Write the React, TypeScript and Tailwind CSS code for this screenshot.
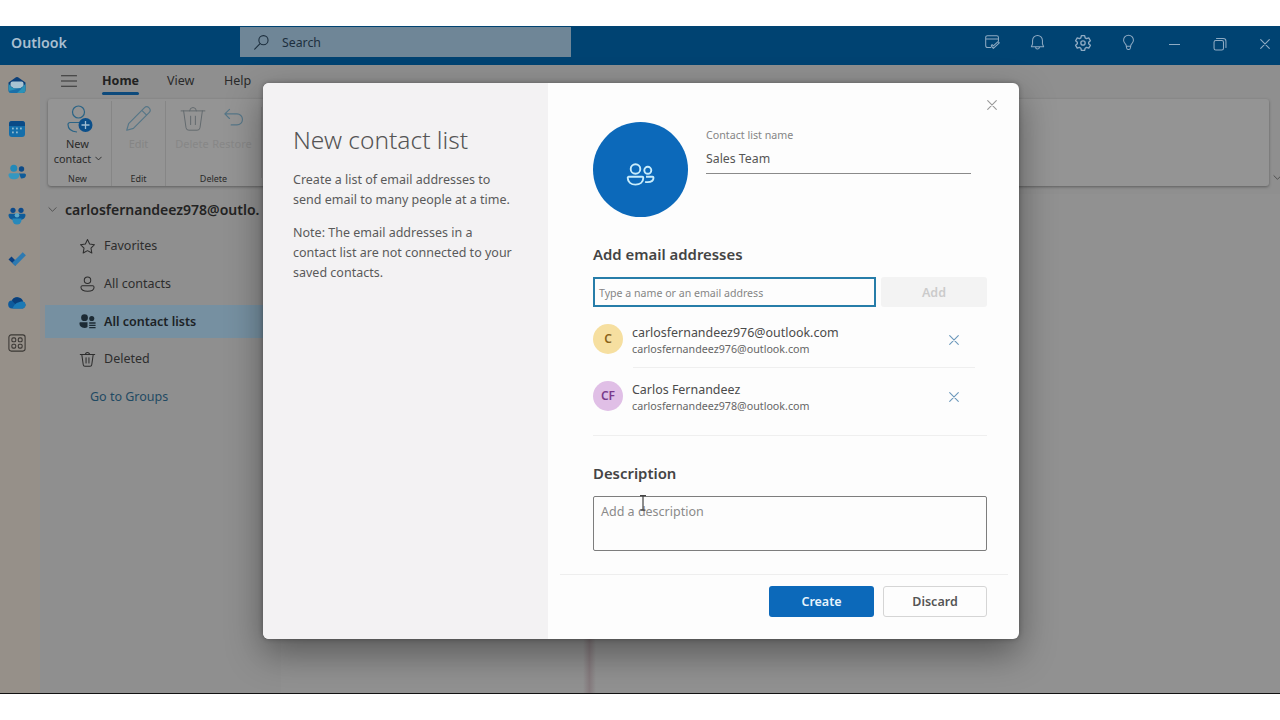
import React from "react";

type P = { children?: React.ReactNode; className?: string };

function Svg({ children, className = "", size = 18, sw = 1.2 }: P & { size?: number; sw?: number }) {
  return (
    <svg width={size} height={size} viewBox="0 0 20 20" fill="none" stroke="currentColor" strokeWidth={sw} strokeLinecap="round" strokeLinejoin="round" className={`shrink-0 ${className}`}>
      {children}
    </svg>
  );
}

function Cross({ size, className }: { size: number; className?: string }) {
  return (
    <svg width={size} height={size} viewBox="0 0 10 10" fill="none" stroke="currentColor" strokeWidth="1.1" strokeLinecap="round" className={className}>
      <path d="M0.7 0.7L9.3 9.3M9.3 0.7L0.7 9.3" />
    </svg>
  );
}

function Trash({ size, sw, className }: { size: number; sw?: number; className?: string }) {
  return (
    <Svg size={size} sw={sw} className={className}>
      <path d="M1.500 4.200h17M7.600 4.200a2.400 2.400 0 0 1 4.800 0M3.300 4.200l1.700 12a2 2 0 0 0 2 1.800h6a2 2 0 0 0 2-1.800l1.700-12M8.300 8v6M11.700 8v6" />
    </Svg>
  );
}

function TopBar() {
  return (
    <header className="flex h-[39px] shrink-0 bg-[#004372] text-[#8fabc3]">
      <div className="w-[240px] pl-[11px] pt-[7px] text-[14.200px] font-semibold leading-5 text-[#a9bfd0]">Outlook</div>
      <div className="mt-px flex h-[30px] w-[331px] items-center bg-[#6f8697] pl-[13px] text-[#1d2f3e]">
        <Svg size={17} sw={1.3}>
          <circle cx="12.300" cy="7.300" r="5.400" />
          <path d="M8.300 11.300L2 17.800" />
        </Svg>
        <span className="ml-[12px] pt-[2px] text-[12.300px]">Search</span>
      </div>
      <div className="ml-auto flex pr-[10px] pt-[8px]">
        <div className="flex w-[45px] justify-start"><Svg size={17}><path d="M8 16H4.500A2.500 2.500 0 0 1 2 13.500V4a2 2 0 0 1 2-2h11a2 2 0 0 1 2 2v4M2 6h15M8.500 14l2.500 3 7-6.500-1.500-1.500-5.500 5-1.500-1.500z" /></Svg></div>
        <div className="flex w-[45px] justify-start"><Svg size={17}><path d="M10 1.800a5.800 5.800 0 0 0-5.800 5.800v4L2.800 15h14.400l-1.400-3.400v-4A5.800 5.800 0 0 0 10 1.800zM7.800 15.500a2.200 2.200 0 0 0 4.400 0" /></Svg></div>
        <div className="flex w-[45px] justify-start"><Svg size={18} sw={1.5}><path d="M8.200 1.800h3.600l.6 2.500 1.500.9 2.500-.8 1.800 3.100-1.900 1.700v1.700l1.900 1.700-1.800 3.100-2.500-.8-1.500.9-.6 2.400H8.200l-.6-2.400-1.500-.9-2.500.8-1.800-3.100 1.900-1.700V9.200L1.800 7.500l1.800-3.100 2.500.8 1.500-.9z" /><circle cx="10" cy="10" r="2.400" /></Svg></div>
        <div className="flex w-[50px] justify-start pl-px"><Svg size={17}><path d="M10 1.500a5.800 5.800 0 0 0-5.800 5.800c0 2.200 1.200 3.500 2.300 4.700.5.500.7 1 .8 1.600l.6 3.200a1.700 1.700 0 0 0 1.600 1.400h1a1.700 1.700 0 0 0 1.600-1.400l.6-3.200c.1-.6.300-1.100.8-1.600 1.100-1.200 2.300-2.500 2.300-4.700A5.800 5.800 0 0 0 10 1.500zM7.300 14.500h5.400" /></Svg></div>
        <div className="w-[44px] pt-[10px]"><div className="h-px w-[11px] bg-[#8fabc3]" /></div>
        <div className="w-[47px] pt-[3px]"><Svg size={14} sw={1.5}><rect x="1.500" y="5" width="13.500" height="13.500" rx="2.500" /><path d="M5 2h9.500a4 4 0 0 1 4 4v9" /></Svg></div>
        <div className="pt-[5px]"><Cross size={10} /></div>
      </div>
    </header>
  );
}

function RailItem({ children }: P) {
  return <div className="flex h-[43.500px] items-center pl-[8px]">{children}</div>;
}

function Rail() {
  return (
    <nav className="flex w-[40px] shrink-0 flex-col bg-[#969089]">
      <div className="-mt-[2px]" />
      <RailItem>
        <svg width="18" height="18" viewBox="0 0 18 18">
          <path d="M0.500 6.500L8 1.300a2 2 0 0 1 2 0l7.500 5.200v7.500a3 3 0 0 1-3 3h-11a3 3 0 0 1-3-3z" fill="#0c3f78" />
          <path d="M2.500 7.500a2 2 0 0 1 2-2h9a2 2 0 0 1 2 2V10L12 12.500H6L2.500 10z" fill="#a9c3d2" />
          <path d="M0.500 7.500L2.500 10c1.500 2 4 2.500 6.500 2.500s5-.5 6.500-2.500l2-2.500V14a3 3 0 0 1-3 3h-11a3 3 0 0 1-3-3z" fill="#2b92b8" />
          <path d="M0.800 15L12 12.300h2L9 17H3.500a3 3 0 0 1-2.700-2z" fill="#1a6fa8" />
        </svg>
      </RailItem>
      <RailItem>
        <svg width="18" height="18" viewBox="0 0 18 18" className="mt-px">
          <rect x="1" y="1" width="16" height="16" rx="3" fill="#146eaa" />
          <path d="M1 6V4a3 3 0 0 1 3-3h10a3 3 0 0 1 3 3v2z" fill="#0b4a86" />
          <g fill="#8db8cf"><rect x="4" y="7.600" width="1.800" height="1.800" /><rect x="8" y="7.600" width="1.800" height="1.800" /><rect x="12" y="7.600" width="1.800" height="1.800" /><rect x="4" y="11.500" width="1.800" height="1.800" /><rect x="8" y="11.500" width="1.800" height="1.800" /></g>
        </svg>
      </RailItem>
      <RailItem>
        <svg width="19" height="18" viewBox="0 0 19 18" className="mt-px">
          <circle cx="5.800" cy="5.300" r="3.500" fill="#2389b8" />
          <circle cx="13.500" cy="6" r="2.700" fill="#0d4a86" />
          <path d="M11 10.500h5.500a1.500 1.500 0 0 1 1.500 1.500c0 2.500-2 3.500-5 3.500z" fill="#0f5b99" />
          <path d="M2 10.200h8A1.500 1.500 0 0 1 11.500 11.700c0 3.200-2.500 4.500-5.500 4.500S0.500 15 0.500 11.700a1.500 1.500 0 0 1 1.500-1.500z" fill="#3597c0" />
        </svg>
      </RailItem>
      <RailItem>
        <svg width="18" height="18" viewBox="0 0 18 18" className="mt-px">
          <circle cx="5" cy="3.300" r="2.600" fill="#0c4a8a" />
          <circle cx="13" cy="3.300" r="2.600" fill="#0c4a8a" />
          <path d="M1.500 6.800h15a1.200 1.200 0 0 1 1 1.200C17.500 11 15 13 11 13H7C3 13 0.500 11 0.500 8a1.200 1.200 0 0 1 1-1.200z" fill="#0e5c9a" />
          <circle cx="9" cy="8.300" r="2.300" fill="#5fa9c8" />
          <path d="M4.500 11.500h9v1.500a4.500 4.500 0 0 1-9 0z" fill="#2789bb" />
        </svg>
      </RailItem>
      <RailItem>
        <svg width="19" height="18" viewBox="0 0 19 18">
          <path d="M0.500 9.500L3.500 6.500 8.500 11.500 7.300 15.800z" fill="#0b3f80" />
          <path d="M7.300 15.900L4.200 12.800 14.700 2.300l3.200 3z" fill="#2d7ab2" />
        </svg>
      </RailItem>
      <RailItem>
        <svg width="19" height="14" viewBox="0 0 19 14" className="mt-[2px]">
          <path d="M4.500 12.500a4 4 0 0 1-.6-8A6 6 0 0 1 15 5.600a3.600 3.600 0 0 1 0 6.900z" fill="#0d5a9c" />
          <path d="M4 4.500A6 6 0 0 1 15 5.600L8 9z" fill="#0a3f7a" />
          <path d="M4.500 12.500c2-5 6-7 10.500-6.900a3.600 3.600 0 0 1 0 6.900z" fill="#1b79b5" />
        </svg>
      </RailItem>
      <div className="-mt-[3px]" />
      <RailItem>
        <Svg size={18} className="text-[#3b3835]">
          <rect x="1" y="1" width="18" height="18" rx="2.500" />
          <rect x="4.300" y="4.300" width="4.300" height="4.300" rx="1.500" />
          <rect x="11.400" y="4.300" width="4.300" height="4.300" rx="1.500" />
          <rect x="4.300" y="11.400" width="4.300" height="4.300" rx="1.500" />
          <rect x="11.400" y="11.400" width="4.300" height="4.300" rx="1.500" />
        </Svg>
      </RailItem>
    </nav>
  );
}

function Ribbon() {
  return (
    <div className="ml-[8px] flex h-[87px] w-[1221px] rounded-[3px] bg-[#949494] text-[11px] leading-[15px] text-[#2a2a2a] shadow-[0_1px_3px_rgba(0,0,0,0.35)]">
      <div className="mt-[2px] flex w-[64px] flex-col items-center border-r border-[#868686] pr-[4px]">
        <svg width="28" height="32" viewBox="0 0 28 32" fill="none" className="ml-[4px] mt-[3px] shrink-0">
          <circle cx="12.500" cy="8" r="6" stroke="#2b6486" strokeWidth="1.200" />
          <path d="M11 28C5 27.500 2 24.500 2 20.500a2 2 0 0 1 2-2h9" stroke="#2b6486" strokeWidth="1.200" />
          <circle cx="19.500" cy="21" r="7" fill="#0b4f8a" />
          <path d="M19.500 17v8M15.500 21h8" stroke="#9fbdd2" strokeWidth="1.300" />
        </svg>
        <div className="h-[15px]">New</div>
        <div className="flex items-center whitespace-nowrap pl-px text-[10.800px]">contact<Svg size={7} sw={2.6} className="ml-[4px]"><path d="M2 6l8 8 8-8" /></Svg></div>
        <div className="mt-[5px] text-[9px]">New</div>
      </div>
      <div className="mt-[2px] flex w-[54px] flex-col items-center border-r border-[#868686]">
        <Svg size={29} sw={0.8} className="mt-[3px] text-[#567687]"><path d="M14 2.700a2.300 2.300 0 0 1 3.300 3.300L6.500 16.800l-4.600 1.300 1.300-4.600zM12.300 4.400l3.300 3.300" /></Svg>
        <div className="mt-[3px] text-[#858585]">Edit</div>
        <div className="mt-[20px] text-[9px]">Edit</div>
      </div>
      <div className="mt-[2px] flex w-[95px] flex-col items-center">
        <div className="flex h-[35px] items-start gap-[15px] pr-[4px] pt-[4px]">
          <Trash size={28} sw={0.7} className="text-[#62696e]" />
          <Svg size={23} sw={1} className="mt-[2px] text-[#567687]"><path d="M6.500 2L2.500 6l4 4M2.500 6H13a4.800 4.800 0 0 1 0 9.600H8" /></Svg>
        </div>
        <div className="flex gap-[3px] text-[#878787]"><span className="w-[34px]">Delete</span><span>Restore</span></div>
        <div className="mt-[20px] text-[9px]">Delete</div>
      </div>
      <div className="my-2 w-px bg-[#868686]" />
    </div>
  );
}

function TreeRow({ icon, label, active }: { icon: React.ReactNode; label: string; active?: boolean }) {
  return (
    <div className={`ml-[4px] flex h-[33px] items-center pl-[34px] ${active ? "bg-[#7690a1] font-semibold text-[#1c2226]" : "text-[#2d2d2d]"}`}>
      {icon}
      <span className="ml-[8px] text-[12.500px]">{label}</span>
    </div>
  );
}

function Page() {
  return (
    <div className="relative flex h-[628px] shrink-0 overflow-hidden bg-[#8f8f8f]">
      <Rail />
      <div className="min-w-0 flex-1">
        <div className="flex h-[34px] pl-[21px] pt-[5px] text-[12.500px] leading-[20px] text-[#2a2a2a]">
          <Svg size={16} sw={1.3} className="mt-[3px] text-[#333]"><path d="M0.500 3.500h19M0.500 10h19M0.500 16.500h19" /></Svg>
          <div className="ml-[25px] w-[37px] pt-[0.500px] font-bold text-[#222]">
            Home
            <div className="mt-[1.500px] h-[3px] rounded-full bg-[#0d4a7c]" />
          </div>
          <div className="ml-[28px] w-[57px] pt-[0.500px]">View</div>
          <div className="pt-[0.500px]">Help</div>
        </div>
        <Ribbon />
        <div className="flex">
          <div className="w-[241px] shrink-0 pt-[12px]">
            <div className="flex h-[23px] items-center pl-[8px]">
              <Svg size={9} sw={1.8} className="text-[#444]"><path d="M2 6l8 8 8-8" /></Svg>
              <span className="ml-[8px] w-[196px] overflow-hidden whitespace-nowrap text-[14px] font-semibold text-[#232323]">carlosfernandeez978@outlo.</span>
            </div>
            <div className="ml-px mt-[9px] flex flex-col gap-[4.700px]">
              <TreeRow label="Favorites" icon={<Svg size={17}><path d="M10 1.800l2.500 5.300 5.700.8-4.100 4 1 5.800-5.100-2.800-5.100 2.800 1-5.800-4.100-4 5.700-.8z" /></Svg>} />
              <TreeRow label="All contacts" icon={<Svg size={17}><circle cx="10" cy="5" r="3.800" /><path d="M3.800 11.500h12.400a1.600 1.600 0 0 1 1.500 1.700c0 3-3.200 4.800-7.700 4.800s-7.700-1.800-7.700-4.800A1.600 1.600 0 0 1 3.800 11.500z" /></Svg>} />
              <TreeRow active label="All contact lists" icon={
                <svg width="17" height="17" viewBox="0 0 20 20" fill="#1c2a34"><circle cx="6.500" cy="5.500" r="4" /><circle cx="15" cy="6.500" r="3" /><path d="M1.500 11H10V16.500c-1 .7-2 1-3.500 1-4 0-6-2-6-5.300a1.200 1.200 0 0 1 1-1.200zM12 11h7.500v1.500H12zM12 13.800h7.500v1.400H12zM12 16.500h7.500v1.400H12z" /></svg>
              } />
              <TreeRow label="Deleted" icon={<Trash size={17} />} />
            </div>
            <div className="mt-[11px] pl-[50px] text-[12.500px] leading-[20px] text-[#1f4a63]">Go to Groups</div>
          </div>
          <div className="mt-[8px] h-[499px] flex-1 bg-[#919191]" />
        </div>
      </div>
      <Svg size={9} sw={2} className="absolute left-[1273px] top-[108px] text-[#4a4a4a]"><path d="M2 6l8 8 8-8" /></Svg>
      <div className="absolute bottom-0 left-[583px] h-[54px] w-[13px] bg-linear-to-r from-[#877f8200] via-[#857b7e] to-[#877f8200]" />
    </div>
  );
}

function Person({ initials, tone, name, mail }: { initials: string; tone: string; name: string; mail: string }) {
  return (
    <div className="flex h-[44px]">
      <div className={`mt-px flex size-[30px] items-center justify-center rounded-full text-[12px] font-semibold ${tone}`}>{initials}</div>
      <div className="ml-[9px] w-[317px] pt-px">
        <div className="h-[18px] text-[12.450px] leading-[18px] text-[#4b4b4b]">{name}</div>
        <div className="text-[10.700px] leading-[15px] text-[#666]">{mail}</div>
      </div>
      <Cross size={10} className="mt-[12px] text-[#6b98bb]" />
    </div>
  );
}

function Dialog() {
  return (
    <div className="absolute left-[263px] top-[83px] flex h-[556px] w-[756px] overflow-hidden rounded-[6px] bg-[#fdfdfd] shadow-[0_14px_36px_rgba(0,0,0,0.4),0_0_5px_rgba(0,0,0,0.3)]">
      <aside className="w-[285px] shrink-0 bg-[#f3f2f3] pl-[30px] pt-[40px] text-[12.500px] leading-[20px] text-[#5a5a5a]">
        <h1 className="text-[24.500px] font-light leading-[34px] text-[#555]">New contact list</h1>
        <p className="mt-[13px] whitespace-nowrap">Create a list of email addresses to<br />send email to many people at a time.</p>
        <p className="mt-[13px] whitespace-nowrap">Note: The email addresses in a<br />contact list are not connected to your<br />saved contacts.</p>
      </aside>
      <section className="flex min-w-0 flex-1 flex-col">
        <div className="flex h-[134px] pl-[45px]">
          <div className="mt-[39px] flex size-[95px] shrink-0 items-center justify-center rounded-full bg-[#0c69ba] text-[#c8ecfb]">
            <svg width="29" height="24" viewBox="0 0 29 24" fill="none" stroke="currentColor" strokeWidth="1.900" className="mr-px mt-[11px]">
              <circle cx="9.500" cy="6" r="4.800" />
              <path d="M2.700 13.800h13.600a1 1 0 0 1 1 1c0 4.500-3.400 6.800-7.800 6.800s-7.800-2.300-7.800-6.800a1 1 0 0 1 1-1z" />
              <circle cx="21.800" cy="7.300" r="3.500" />
              <path d="M20 13.800h6.500a1 1 0 0 1 1 1c0 3-2.500 4.300-6 4.300-1 0-1.700-.1-2.400-.3" />
            </svg>
          </div>
          <div className="ml-[18px] mt-[43px] h-[48px] w-[265px] border-b border-[#8a8a8a]">
            <div className="text-[10.700px] leading-[18px] text-[#858585]">Contact list name</div>
            <div className="mt-[5px] text-[12.300px] leading-[20px] text-[#555]">Sales Team</div>
          </div>
          <Cross size={10} className="ml-[16px] mt-[17px] text-[#999]" />
        </div>
        <div className="w-[440px] pl-[45px]">
          <h2 className="mt-[26px] text-[14.900px] font-semibold leading-[22px] text-[#444]">Add email addresses</h2>
          <div className="mt-[12px] flex gap-[5px]">
            <div className="flex h-[30px] w-[283px] shrink-0 items-center border-2 border-[#277da9] pl-[4px] pt-[4px] text-[10.600px] text-[#858585]">Type a name or an email address</div>
            <div className="flex h-[30px] w-[106px] shrink-0 items-center justify-center rounded-[3px] bg-[#f3f3f3] pt-[2px] text-[12.500px] font-semibold text-[#cbcbcb]">Add</div>
          </div>
          <div className="mt-[16px] h-[113px] w-[394px] border-b border-[#efefef]">
            <Person initials="C" tone="bg-[#f6dfa0] text-[#8a6318]" name="carlosfernandeez976@outlook.com" mail="carlosfernandeez976@outlook.com" />
            <div className="mb-[12px] ml-[40px] mr-[12px] h-px bg-[#efefef]" />
            <Person initials="CF" tone="bg-[#e0bfe6] text-[#7a3a8c]" name="Carlos Fernandeez" mail="carlosfernandeez978@outlook.com" />
          </div>
          <h2 className="mt-[26px] text-[14.900px] font-semibold leading-[22px] text-[#444]">Description</h2>
          <div className="relative mt-[12px] h-[55px] w-[394px] rounded-[2px] border border-[#7d7d7d] pl-[7px] pt-[5px] text-[12.500px] leading-[20px] text-[#8a8a8a]">
            Add a description
            <svg width="8" height="16" viewBox="0 0 8 16" fill="none" stroke="#444" strokeWidth="1.200" className="absolute left-[45px] top-[-2px]"><path d="M1 0.600h6M4 0.600v14.500M1.500 15.200h5" /></svg>
          </div>
        </div>
        <div className="ml-[12px] mr-[11px] mt-[23px] h-px bg-[#eee]" />
        <div className="mr-[32px] mt-[11px] flex justify-end gap-[9px] text-[12.500px] font-semibold">
          <div className="flex h-[31px] w-[105px] items-center justify-center rounded-[3px] bg-[#0c69ba] pt-px text-[#e8f4fc]">Create</div>
          <div className="flex h-[31px] w-[104px] items-center justify-center rounded-[3px] border border-[#d5d5d5] pt-px text-[#555]">Discard</div>
        </div>
      </section>
    </div>
  );
}

export default function App() {
  return (
    <main className="relative flex h-[720px] w-[1280px] flex-col overflow-hidden bg-white pt-[26px] font-['Noto_Sans','Open_Sans',sans-serif]">
      <TopBar />
      <Page />
      <div className="h-px shrink-0 bg-[#111]" />
      <div className="h-[26px] shrink-0 bg-white" />
      <Dialog />
    </main>
  );
}
